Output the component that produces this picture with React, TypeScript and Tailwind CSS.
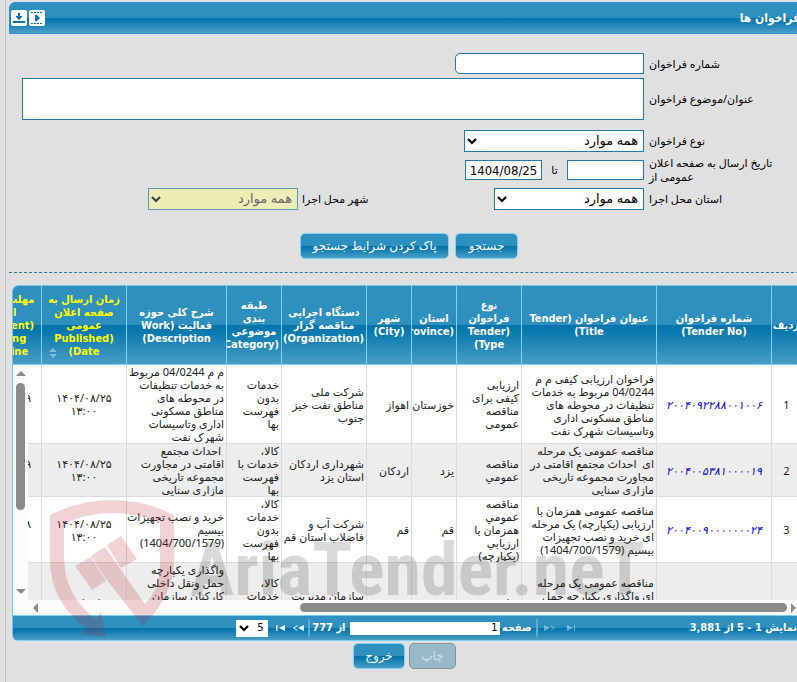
import clsx from "clsx";
import { Fragment, type ReactNode } from "react";

interface IColumn {
	id: string;
	lines: string[];
	width: string;
	highlight?: boolean;
}

interface ITender {
	id: number;
	no: string;
	title: string[];
	type: string[];
	province: string;
	city: string;
	organization: string[];
	category: string[];
	description: string[];
	published: string[];
	deadline: string[];
}

const columns: IColumn[] = [
	{ id: "row", lines: ["ردیف"], width: "w-[30px]" },
	{ id: "no", lines: ["شماره فراخوان", "(Tender No)"], width: "w-[115px]" },
	{ id: "title", lines: ["عنوان فراخوان (Tender", "Title)"], width: "w-[135px]" },
	{ id: "type", lines: ["نوع", "فراخوان", "(Tender", "Type)"], width: "w-[65px]" },
	{ id: "province", lines: ["استان", "(Province)"], width: "w-[45px]" },
	{ id: "city", lines: ["شهر", "(City)"], width: "w-[45px]" },
	{
		id: "organization",
		lines: ["دستگاه اجرایی", "مناقصه گزار", "(Organization)"],
		width: "w-[85px]",
	},
	{
		id: "category",
		lines: ["طبقه", "بندی", "موضوعی", "(Category)"],
		width: "w-[55px]",
	},
	{
		id: "description",
		lines: ["شرح کلی حوزه", "فعالیت (Work", "Description)"],
		width: "w-[100px]",
	},
	{
		id: "published",
		lines: ["زمان ارسال به", "صفحه اعلان", "عمومی", "(Published", "Date)"],
		width: "w-[85px]",
		highlight: true,
	},
	{
		id: "deadline",
		lines: ["مهلت ارسال", "اسناد", "(Document", "Sending", "Deadline"],
		width: "w-[76px]",
		highlight: true,
	},
];

const tenders: ITender[] = [
	{
		id: 1,
		no: "۲۰۰۴۰۹۲۲۸۸۰۰۱۰۰۶",
		title: [
			"فراخوان ارزیابی کیفی م م",
			"04/0244 مربوط به خدمات",
			"تنظیفات در محوطه های",
			"مناطق مسکونی اداری",
			"وتاسیسات شهرک نفت",
		],
		type: ["ارزیابی", "کیفی برای", "مناقصه", "عمومی"],
		province: "خوزستان",
		city: "اهواز",
		organization: ["شرکت ملی", "مناطق نفت خیز", "جنوب"],
		category: ["خدمات", "بدون", "فهرست", "بها"],
		description: [
			"م م 04/0244 مربوط",
			"به خدمات تنظیفات",
			"در محوطه های",
			"مناطق مسکونی",
			"اداری وتاسیسات",
			"شهرک نفت",
		],
		published: ["۱۴۰۴/۰۸/۲۵", "۱۳:۰۰"],
		deadline: ["۱۴۰۴/۰۸/۲۹", "۱۹:۰۰"],
	},
	{
		id: 2,
		no: "۲۰۰۴۰۰۵۳۸۱۰۰۰۰۱۹",
		title: [
			"مناقصه عمومی یک مرحله",
			"ای \u00a0احداث مجتمع اقامتی در",
			"مجاورت مجموعه تاریخی",
			"مازاری سنایی",
		],
		type: ["مناقصه", "عمومي"],
		province: "یزد",
		city: "اردکان",
		organization: ["شهرداری اردکان", "استان یزد"],
		category: ["کالا،", "خدمات با", "فهرست", "بها"],
		description: [
			"\u00a0احداث مجتمع",
			"اقامتی در مجاورت",
			"مجموعه تاریخی",
			"مازاری سنایی",
		],
		published: ["۱۴۰۴/۰۸/۲۵", "۱۳:۰۰"],
		deadline: ["۱۴۰۴/۰۸/۲۹", "۱۹:۰۰"],
	},
	{
		id: 3,
		no: "۲۰۰۴۰۰۹۰۰۰۰۰۰۰۲۴",
		title: [
			"مناقصه عمومی همزمان با",
			"ارزیابی (یکپارچه) یک مرحله",
			"ای خرید و نصب تجهیزات",
			"بیسیم (1404/700/1579)",
		],
		type: ["مناقصه", "عمومي", "همزمان با", "ارزيابي", "(يكپارچه)"],
		province: "قم",
		city: "قم",
		organization: ["شرکت آب و", "فاضلاب استان قم"],
		category: ["کالا،", "خدمات", "بدون", "فهرست", "بها"],
		description: ["خرید و نصب تجهیزات", "بیسیم", "(1404/700/1579)"],
		published: ["۱۴۰۴/۰۸/۲۵", "۱۳:۰۰"],
		deadline: ["۱۴۰۴/۰۹/۰۸", "۱۹:۰۰"],
	},
	{
		id: 4,
		no: "۲۰۰۴۰۰۳۱۹۸۰۰۰۰۰۷",
		title: [
			"مناقصه عمومی یک مرحله",
			"ای واگذاری یکپارچه حمل",
			"ونقل داخلی کارکنان",
			"سازمان مدیریت",
			"استان",
		],
		type: ["مناقصه", "عمومي"],
		province: "تهران",
		city: "تهران",
		organization: ["سازمان مدیریت", "و برنامه ریزی", "استان"],
		category: ["کالا،", "خدمات", "بدون", "فهرست", "بها"],
		description: [
			"واگذاری یکپارچه",
			"حمل ونقل داخلی",
			"کارکنان سازمان",
			"مدیریت",
			"و برنامه ریزی",
			"استان",
			"تهران",
		],
		published: ["۱۴۰۴/۰۸/۲۵", "۱۳:۰۰"],
		deadline: ["۱۴۰۴/۰۹/۰۲", "۱۹:۰۰"],
	},
];

const glossy =
	"bg-[linear-gradient(#2f91c0_0%,#2d8fbe_50%,#0073ab_50%,#0b7ab0_60%,#4a9dc5_100%)]";
const field = "border border-[#2577ac] bg-white text-black outline-none";
const condensed = "font-['DejaVu_Sans_Condensed','DejaVu_Sans',sans-serif]";

function Lines({ lines }: { lines: string[] }) {
	return (
		<>
			{lines.map((line, index) => (
				<Fragment key={line + index}>
					{index > 0 && <br />}
					{line}
				</Fragment>
			))}
		</>
	);
}

function Chevron({ className }: { className?: string }) {
	return (
		<svg
			viewBox="0 0 10 8"
			className={clsx("pointer-events-none absolute h-2 w-2.5", className)}
			aria-hidden="true"
		>
			<path d="M1 2l4 4 4-4" fill="none" stroke="currentColor" strokeWidth="2.2" />
		</svg>
	);
}

function SelectBox({
	id,
	className,
	disabled,
}: {
	id: string;
	className: string;
	disabled?: boolean;
}) {
	return (
		<div className={clsx("relative", className, disabled && "opacity-70")}>
			<select
				id={id}
				disabled={disabled}
				className={clsx(
					"block h-[22px] w-full appearance-none border border-[#2577ac] px-[5px] text-[13px] outline-none",
					disabled ? "bg-[#f5f3a5] text-[#333]" : "bg-white text-black",
				)}
			>
				<option>همه موارد</option>
			</select>
			<Chevron className="top-[7px] left-[3px]" />
		</div>
	);
}

function FormLabel({ id, children }: { id: string; children: ReactNode }) {
	return (
		<label htmlFor={id} className="w-40 shrink-0 pr-1 text-left leading-[14px]">
			{children}
		</label>
	);
}

function ActionButton({
	children,
	className,
	disabled,
}: {
	children: ReactNode;
	className: string;
	disabled?: boolean;
}) {
	return (
		<button
			type="button"
			disabled={disabled}
			className={clsx(
				"h-[26px] rounded-[5px] border text-[12px]",
				disabled
					? "border-[#8b8f92] bg-[#97b9ca] text-[#d5e2e9]"
					: ["border-[#7bd3f6] text-white", glossy],
				className,
			)}
		>
			{children}
		</button>
	);
}

function TitleBar() {
	return (
		<header
			className={clsx(
				"flex h-8 items-center justify-between rounded-tl-md border border-[#2b90e0] pr-2 pl-px",
				glossy,
			)}
		>
			<h1 className={clsx("text-[12px] font-bold text-white", condensed)}>
				فراخوان ها
			</h1>
			<div className="flex gap-0.5">
				<button type="button" aria-label="film" className="size-4">
					<svg viewBox="0 0 16 16" className="size-4">
						<rect width="16" height="16" rx="2" fill="#fff" />
						<path
							d="M2 2.5h12M2 13.5h12"
							stroke="#0073ab"
							strokeDasharray="2 1"
						/>
						<path d="M6 5h2l3 3-3 3H6z" fill="#0073ab" />
					</svg>
				</button>
				<button type="button" aria-label="download" className="size-4">
					<svg viewBox="0 0 16 16" className="size-4">
						<rect width="16" height="16" rx="2" fill="#fff" />
						<path d="M7 3h2v3h2v1L8 10 5 7V6h2z" fill="#0073ab" />
						<path d="M2 11h12v2H2z" fill="#0073ab" />
					</svg>
				</button>
			</div>
		</header>
	);
}

function SearchForm() {
	return (
		<form className="border-b border-dashed border-[#2577ac] pt-[19px] pb-[13px]">
			<div className="flex h-[21px] items-center">
				<FormLabel id="tender-no">شماره فراخوان</FormLabel>
				<input
					id="tender-no"
					className={clsx("mr-[5px] h-[21px] w-[189px] rounded-l-[5px]", field)}
				/>
			</div>
			<div className="mt-1 flex items-center">
				<FormLabel id="tender-title">عنوان/موضوع فراخوان</FormLabel>
				<textarea
					id="tender-title"
					className={clsx("mr-[5px] ml-[13px] h-[42px] flex-1 resize-none", field)}
				/>
			</div>
			<div className="mt-2.5 flex items-center">
				<FormLabel id="tender-type">نوع فراخوان</FormLabel>
				<SelectBox id="tender-type" className="mr-[5px] w-[180px]" />
			</div>
			<div className="my-0.5 flex h-8 items-center">
				<FormLabel id="date-from">
					تاریخ ارسال به صفحه اعلان
					<br />
					عمومی از
				</FormLabel>
				<input id="date-from" className={clsx("mr-[5px] h-5 w-[77px]", field)} />
				<label htmlFor="date-to" className="w-[25px] text-center">
					تا
				</label>
				<input
					id="date-to"
					defaultValue="1404/08/25"
					dir="ltr"
					className={clsx("h-5 w-[77px] text-center text-[13px]", field, condensed)}
				/>
			</div>
			<div className="flex items-center">
				<FormLabel id="province">استان محل اجرا</FormLabel>
				<SelectBox id="province" className="mr-[5px] w-[150px]" />
				<label
					htmlFor="city"
					className="mr-[112px] w-20 text-left whitespace-nowrap"
				>
					شهر محل اجرا
				</label>
				<SelectBox id="city" className="mr-1 w-[150px]" disabled />
			</div>
			<div className="mt-[23px] flex justify-center gap-1.5">
				<ActionButton className="w-[63px]">جستجو</ActionButton>
				<ActionButton className="w-[149px]">پاک کردن شرایط جستجو</ActionButton>
			</div>
		</form>
	);
}

function HeaderCell({ column }: { column: IColumn }) {
	return (
		<th
			className={clsx(
				"relative h-[79px] overflow-hidden border-b border-l border-[#7bd3f6] px-0.5 text-center font-bold",
				column.highlight ? "text-[#ffff00]" : "text-white",
				column.width,
				condensed,
				glossy,
			)}
		>
			<Lines lines={column.lines} />
			{column.id === "published" && (
				<svg viewBox="0 0 8 10" className="absolute bottom-1.5 left-[7px] h-2.5 w-2">
					<path d="M4 0l4 4H0zM4 10l4-4H0z" fill="#86bcd8" />
				</svg>
			)}
		</th>
	);
}

function TenderRow({ tender }: { tender: ITender }) {
	const cell = "overflow-hidden border-b border-l border-[#dcdcdc] px-0.5";

	return (
		<tr className={tender.id % 2 ? "bg-white" : "bg-[#ededed]"}>
			<td className={clsx(cell, "text-center")}>{tender.id}</td>
			<td className={clsx(cell, "text-center")}>
				<a href={`#${tender.id}`} className="text-[#0000ee] italic">
					{tender.no}
				</a>
			</td>
			<td className={cell}>
				<Lines lines={tender.title} />
			</td>
			<td className={cell}>
				<Lines lines={tender.type} />
			</td>
			<td className={cell}>{tender.province}</td>
			<td className={cell}>{tender.city}</td>
			<td className={cell}>
				<Lines lines={tender.organization} />
			</td>
			<td className={cell}>
				<Lines lines={tender.category} />
			</td>
			<td className={cell}>
				<Lines lines={tender.description} />
			</td>
			<td className={clsx(cell, "text-center")}>
				<Lines lines={tender.published} />
			</td>
			<td className={clsx(cell, "text-center")}>
				<Lines lines={tender.deadline} />
			</td>
		</tr>
	);
}

function VerticalScrollbar() {
	return (
		<div className="absolute top-[79px] bottom-0 left-0 flex w-[15px] flex-col items-center bg-[#fcfcfc] py-1.5">
			<svg viewBox="0 0 10 5" className="h-[5px] w-2.5">
				<path d="M5 0l5 5H0z" fill="#8b8b8b" />
			</svg>
			<div className="mt-[7px] h-[127px] w-[9px] rounded-full bg-[#8b8b8b]" />
			<svg viewBox="0 0 10 5" className="mt-auto h-[5px] w-2.5">
				<path d="M5 5l5-5H0z" fill="#8b8b8b" />
			</svg>
		</div>
	);
}

function HorizontalScrollbar() {
	return (
		<div className="flex h-[15px] items-center bg-[#fcfcfc] pr-[5px] pl-5">
			<svg viewBox="0 0 5 10" className="h-2.5 w-[5px]">
				<path d="M0 0l5 5-5 5z" fill="#8b8b8b" />
			</svg>
			<div className="mr-1 h-[9px] w-[487px] rounded-full bg-[#8b8b8b]" />
			<svg viewBox="0 0 5 10" className="mr-auto h-2.5 w-[5px]">
				<path d="M5 0L0 5l5 5z" fill="#8b8b8b" />
			</svg>
		</div>
	);
}

function Pager() {
	return (
		<div
			className={clsx(
				"relative flex h-[26px] items-center border-y border-[#7bd3f6] pr-1 font-bold text-white",
				condensed,
				glossy,
			)}
		>
			<span className="absolute">نمایش 1 - 5 از 3,881</span>
			<div className="mx-auto flex items-center">
				<button type="button" aria-label="first" disabled className="h-4 w-2">
					<svg viewBox="0 0 8 6" className="h-1.5 w-2 opacity-50">
						<path d="M0 0l6 3-6 3zM7 0h1v6H7z" fill="#cfe9f5" />
					</svg>
				</button>
				<button type="button" aria-label="previous" disabled className="mr-3 h-4 w-[11px]">
					<svg viewBox="0 0 11 6" className="h-1.5 w-[11px] opacity-50">
						<path d="M0 0l6 3-6 3z" fill="#cfe9f5" />
						<path d="M6.5 .5l4 2.5-4 2.5" stroke="#cfe9f5" fill="none" />
					</svg>
				</button>
				<span className="mr-1.5 ml-1 h-[18px] w-0.5 bg-[#63acd0]" />
				<label htmlFor="page" className="w-7 whitespace-nowrap">
					صفحه
				</label>
				<input
					id="page"
					defaultValue="1"
					className="mr-1 h-[13px] w-[150px] bg-white px-0.5 font-normal text-black outline-none"
				/>
				<span className="mr-1 w-8 whitespace-nowrap">از 777</span>
				<span className="mx-1 h-[18px] w-0.5 bg-[#63acd0]" />
				<button type="button" aria-label="next" className="h-4 w-[11px]">
					<svg viewBox="0 0 11 6" className="h-1.5 w-[11px]">
						<path d="M11 0L5 3l6 3z" fill="#e6f7fc" />
						<path d="M4.5 .5l-4 2.5 4 2.5" stroke="#e6f7fc" fill="none" />
					</svg>
				</button>
				<button type="button" aria-label="last" className="mr-2 h-4 w-[9px]">
					<svg viewBox="0 0 9 6" className="h-1.5 w-[9px]">
						<path d="M9 0L3 3l6 3zM0 0h1.5v6H0z" fill="#e6f7fc" />
					</svg>
				</button>
				<div className="relative mr-2 w-8 text-black">
					<select
						aria-label="rows"
						className="block h-[17px] w-full appearance-none bg-white pr-1 font-normal outline-none"
					>
						<option>5</option>
					</select>
					<Chevron className="top-1 left-[3px]" />
				</div>
			</div>
		</div>
	);
}

function Watermark() {
	return (
		<div dir="ltr" className="pointer-events-none absolute top-[213px] left-9">
			<svg viewBox="48 498 130 141" className="h-[141px] w-[130px]">
				<g fill="#b71c2b" fillOpacity="0.2">
					<path d="M50 515Q80 500 112 500Q145 500 174 515V560Q174 595 143 626L106 579 121 570 145 604Q160 588 160 565V523Q138 513 112 513Q86 513 64 524V560Q66 598 96 619L101 612 106 637 80 634 87 629Q50 602 50 560Z" />
					<path d="M75 566L91 557 106 581 92 590z" />
					<path d="M91 556L105 547 121 570 106 579z" />
					<path d="M107 545L121 536 137 559 121 568z" />
				</g>
			</svg>
			<span className="absolute top-6 left-[142px] font-['Liberation_Sans_Narrow','Roboto_Condensed','Liberation_Sans',sans-serif] text-[74px] leading-[96px] font-bold whitespace-nowrap text-black/15">
				AriaTender.neT
			</span>
		</div>
	);
}

function TenderGrid() {
	return (
		<section className="relative mt-3 mr-2 ml-[3px]">
			<div className="overflow-hidden rounded-l-md border-t border-l border-[#7cc0e6]">
				<div className="relative h-[314px] overflow-hidden bg-white">
					<table className="w-[836px] table-fixed border-separate border-spacing-0 text-right leading-[13px] whitespace-nowrap text-[#222]">
						<thead>
							<tr>
								{columns.map((column) => (
									<HeaderCell key={column.id} column={column} />
								))}
							</tr>
						</thead>
						<tbody>
							{tenders.map((tender) => (
								<TenderRow key={tender.id} tender={tender} />
							))}
						</tbody>
					</table>
					<VerticalScrollbar />
				</div>
				<HorizontalScrollbar />
				<Pager />
			</div>
			<Watermark />
		</section>
	);
}

export default function App() {
	return (
		<div
			dir="rtl"
			className="min-h-screen overflow-hidden bg-[#e0e0e0] font-['Noto_Sans','DejaVu_Sans',sans-serif] text-[11px] text-black"
		>
			<div className="ml-[5px] min-h-screen border-l border-[#c4c4c4] pt-0.5">
				<main className="-mr-3 ml-[3px]">
					<TitleBar />
					<SearchForm />
					<TenderGrid />
					<div className="mt-0.5 mr-[9px] flex justify-center gap-1">
						<ActionButton className="w-[47px]" disabled>
							چاپ
						</ActionButton>
						<ActionButton className="w-[52px]">خروج</ActionButton>
					</div>
				</main>
			</div>
		</div>
	);
}
